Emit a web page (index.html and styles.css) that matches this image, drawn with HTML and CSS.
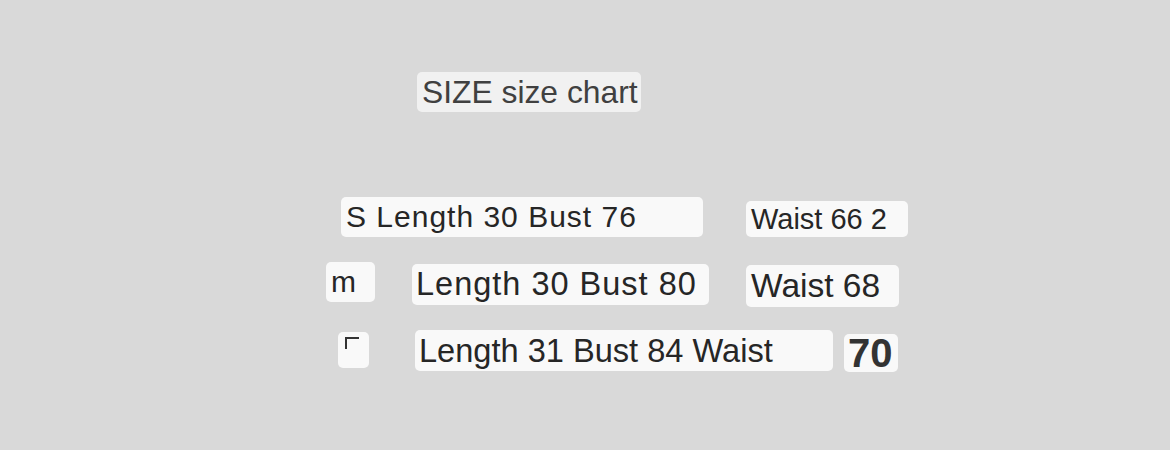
FILE: index.html
```html
<!DOCTYPE html>
<html lang="en">
<head>
<meta charset="utf-8">
<title>SIZE size chart</title>
<link rel="stylesheet" href="styles.css">
</head>
<body>
<main class="page">
  <div class="title-row">
    <div class="box title">SIZE size chart</div>
  </div>
  <div class="row row1">
    <div class="box r1a">S Length 30 Bust 76</div>
    <div class="box r1b">Waist 66 2</div>
  </div>
  <div class="row row2">
    <div class="box r2a">m</div>
    <div class="box r2b">Length 30 Bust 80</div>
    <div class="box r2c">Waist 68</div>
  </div>
  <div class="row row3">
    <div class="box r3a"><span class="corner"></span></div>
    <div class="box r3b">Length 31 Bust 84 Waist</div>
    <div class="box r3c">70</div>
  </div>
</main>
</body>
</html>
```

FILE: styles.css
```css
html, body {
  margin: 0;
  padding: 0;
  background: #d9d9d9;
  font-family: "Liberation Sans", Arial, sans-serif;
  color: #262626;
}
.page {
  width: 1170px;
  height: 450px;
  padding-top: 72px;
  box-sizing: border-box;
}
.box {
  background: #f9f9f9;
  border-radius: 5px;
  display: flex;
  align-items: center;
  box-sizing: border-box;
  white-space: nowrap;
}
.title-row {
  display: flex;
  padding-left: 417px;
}
.title {
  width: 224px;
  height: 40px;
  background: #f1f1f1;
  color: #404040;
  font-size: 31.8px;
  padding-left: 5px;
}
.row {
  display: flex;
  align-items: flex-start;
}
.row1 { margin-top: 85px; padding-left: 341px; }
.r1a {
  width: 362px; height: 40px;
  font-size: 30px; letter-spacing: 1px;
  padding-left: 5px;
}
.r1b {
  margin-left: 43px; margin-top: 4px;
  width: 162px; height: 36px;
  font-size: 29px; padding-left: 5px;
}
.row2 { margin-top: 25px; padding-left: 326px; }
.r2a {
  width: 49px; height: 40px;
  font-size: 30px; padding-left: 5px;
}
.r2b {
  margin-left: 37px; margin-top: 2px;
  width: 297px; height: 41px;
  font-size: 32.5px; letter-spacing: 1px;
  padding-left: 4px;
}
.r2c {
  margin-left: 37px; margin-top: 3px;
  width: 153px; height: 42px;
  font-size: 33.5px; padding-left: 5px;
}
.row3 { margin-top: 23px; padding-left: 338px; }
.r3a {
  margin-top: 2px;
  width: 31px; height: 36px;
  align-items: flex-start;
  padding: 5px 0 0 7px;
}
.corner {
  width: 14px; height: 12px;
  border-top: 2px solid #333;
  border-left: 2px solid #333;
  box-sizing: border-box;
}
.r3b {
  margin-left: 46px;
  width: 418px; height: 41px;
  font-size: 32.6px; padding-left: 4px;
}
.r3c {
  margin-left: 11px; margin-top: 4px;
  width: 54px; height: 38px;
  font-size: 40px; font-weight: bold;
  color: #333;
  padding-left: 4px;
}
```
